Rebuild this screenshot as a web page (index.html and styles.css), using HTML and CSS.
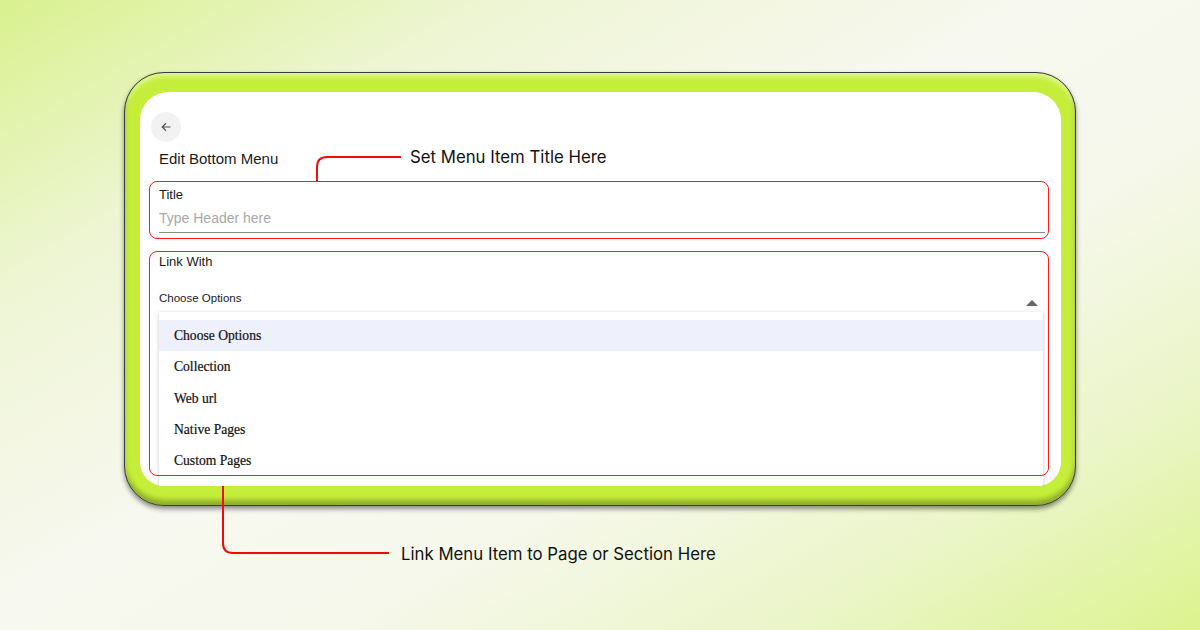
FILE: index.html
```html
<!DOCTYPE html>
<html lang="en">
<head>
  <meta charset="UTF-8" />
  <meta name="viewport" content="width=device-width, initial-scale=1" />
  <title>Edit Bottom Menu</title>
  <link rel="stylesheet" href="styles.css">
</head>
<body>
  <div class="stage">
    <div class="frame">
      <div class="panel">
        <button class="back-btn" type="button" aria-label="Back">
          <svg width="12" height="12" viewBox="0 0 16 16"><path d="M14 8H3M8 3L3 8l5 5" fill="none" stroke="#555" stroke-width="1.6"/></svg>
        </button>
        <h2 class="panel-title">Edit Bottom Menu</h2>

        <div class="field field-title">
          <label for="title">Title</label>
          <input type="text" id="title" placeholder="Type Header here" />
        </div>

        <div class="field field-link">
          <label>Link With</label>
          <div class="select-row">
            <span class="select-value">Choose Options</span>
            <span class="caret"></span>
          </div>
          <ul class="options">
            <li class="active">Choose Options</li>
            <li>Collection</li>
            <li>Web url</li>
            <li>Native Pages</li>
            <li>Custom Pages</li>
          </ul>
        </div>
      </div>
    </div>

    <!-- callout lines -->
    <svg class="callouts" width="1200" height="630" viewBox="0 0 1200 630">
      <path d="M317 181V167Q317 157 327 157H401" />
      <path d="M223 476V543Q223 553 233 553H389" />
    </svg>
    <div class="callout-text callout-top">Set Menu Item Title Here</div>
    <div class="callout-text callout-bottom">Link Menu Item to Page or Section Here</div>
  </div>
</body>
</html>
```
FILE: styles.css
```css
body {
  margin: 0;
  font-family: "Liberation Sans", Arial, sans-serif;
  color: #222;
}
.stage {
  position: relative;
  width: 1200px;
  height: 630px;
  overflow: hidden;
  box-sizing: border-box;
  padding: 72px 0 0 124px;
  background: linear-gradient(150deg, #d9f18f 0%, #eef5d4 22%, #f7f8ef 45%, #f6f8ec 62%, #ebf5c8 82%, #dcf38f 100%);
}
.frame {
  width: 952px;
  height: 434px;
  box-sizing: border-box;
  padding: 19px 14px 19px 15px;
  background: #c5ee3a;
  border: 1px solid #3a3a3a;
  border-radius: 40px;
  box-shadow: 0 3px 5px rgba(0,0,0,0.45), inset 0 -5px 5px rgba(0,0,0,0.28), inset 0 4px 4px rgba(255,255,255,0.45);
}
.panel {
  height: 100%;
  box-sizing: border-box;
  background: #fff;
  border-radius: 28px 28px 24px 24px;
  padding: 20px 12px 0 9px;
  overflow: hidden;
}
.back-btn {
  display: flex;
  align-items: center;
  justify-content: center;
  width: 30px;
  height: 30px;
  margin-left: 2px;
  padding: 0;
  border: none;
  border-radius: 50%;
  background: #f2f2f2;
}
.panel-title {
  margin: 8px 0 13px 10px;
  font-size: 15px;
  font-weight: normal;
  line-height: 18px;
  color: #1a1a1a;
}
.field {
  position: relative;
  box-sizing: border-box;
  padding: 0 4px 0 10px;
}
.field::after {
  content: "";
  position: absolute;
  inset: 0;
  border: 1px solid #ff1a1a;
  border-radius: 8px;
  pointer-events: none;
  z-index: 3;
}
.field label {
  display: block;
  font-size: 13px;
  color: #1a1a1a;
}
.field-title {
  height: 58px;
  padding-top: 6px;
}
.field-title input {
  display: block;
  width: 100%;
  box-sizing: border-box;
  margin-top: 8px;
  padding: 0 0 6px;
  border: none;
  border-bottom: 1.5px solid #8a8a8a;
  font-family: "Liberation Sans", Arial, sans-serif;
  font-size: 14px;
  color: #222;
  outline: none;
}
.field-title input::placeholder {
  color: #a8a8a8;
}
.field-link {
  height: 225px;
  margin-top: 12px;
  padding-top: 3px;
}
.select-row {
  display: flex;
  align-items: center;
  justify-content: space-between;
  margin-top: 20px;
  padding-right: 7px;
}
.select-value {
  font-size: 11.5px;
  color: #222;
}
.caret {
  width: 0;
  height: 0;
  margin-top: 11px;
  border-left: 6px solid transparent;
  border-right: 6px solid transparent;
  border-bottom: 6px solid #666;
}
.options {
  position: absolute;
  top: 61px;
  left: 10px;
  right: 6px;
  margin: 0;
  padding: 8px 0 20px;
  list-style: none;
  background: #fff;
  box-shadow: 0 1px 4px rgba(0,0,0,0.22);
  z-index: 2;
}
.options li {
  height: 31.3px;
  line-height: 31.3px;
  padding-left: 15px;
  font-family: "Liberation Serif", "Times New Roman", serif;
  font-size: 13.6px;
  color: #111;
  -webkit-text-stroke: 0.2px #111;
}
.options li.active {
  background: #eef0fc;
}
.callouts {
  position: absolute;
  left: 0;
  top: 0;
  pointer-events: none;
}
.callouts path {
  fill: none;
  stroke: #f20a0a;
  stroke-width: 2;
}
.callout-text {
  position: absolute;
  font-family: Inter, "Noto Sans", sans-serif;
  font-size: 16.8px;
  line-height: 20px;
  color: #111;
  white-space: nowrap;
}
.callout-top {
  left: 410px;
  top: 147px;
}
.callout-bottom {
  left: 401px;
  top: 544px;
}
```
